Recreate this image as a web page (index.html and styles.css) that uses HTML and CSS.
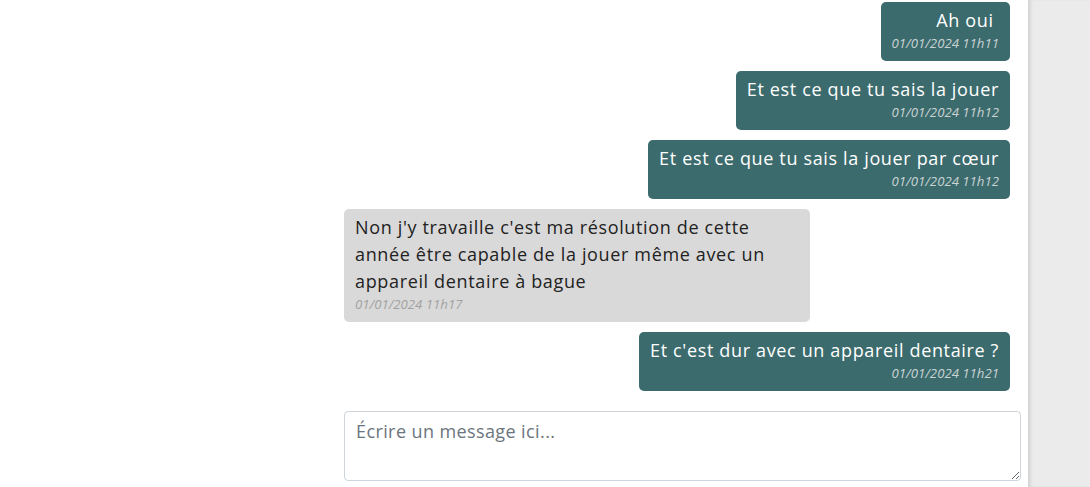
FILE: index.html
```html
<!DOCTYPE html>
<html lang="fr">
<head>
    <meta charset="UTF-8">
    <meta name="viewport" content="width=device-width, initial-scale=1.0">
    <title>Messagerie</title>
    <link rel="stylesheet" href="styles.css">
</head>
<body>
    <main class="chat">
        <div class="messages">
            <div class="msg mine">
                <div class="msg-text">Ah oui&nbsp;</div>
                <div class="msg-date">01/01/2024 11h11</div>
            </div>
            <div class="msg mine">
                <div class="msg-text">Et est ce que tu sais la jouer</div>
                <div class="msg-date">01/01/2024 11h12</div>
            </div>
            <div class="msg mine">
                <div class="msg-text">Et est ce que tu sais la jouer par cœur</div>
                <div class="msg-date">01/01/2024 11h12</div>
            </div>
            <div class="msg theirs">
                <div class="msg-text">Non j'y travaille c'est ma résolution de cette année être capable de la jouer même avec un appareil dentaire à bague</div>
                <div class="msg-date">01/01/2024 11h17</div>
            </div>
            <div class="msg mine">
                <div class="msg-text">Et c'est dur avec un appareil dentaire ?</div>
                <div class="msg-date">01/01/2024 11h21</div>
            </div>
        </div>
        <textarea class="composer" placeholder="Écrire un message ici..."></textarea>
    </main>
    <aside class="side"></aside>
</body>
</html>
```

FILE: styles.css
```css
html, body {
    height: 100%;
}
body {
    display: flex;
    margin: 0;
    font-family: "Open Sans", Arial, sans-serif;
    font-size: 18px;
    line-height: 1.5;
    color: #222;
    background: #fff;
    overflow: hidden;
}
.chat {
    flex: 1;
    display: flex;
    flex-direction: column;
    padding: 2px 7px 0 344px;
}
.messages {
    display: flex;
    flex-direction: column;
    gap: 10px;
    width: 666px;
}
.msg {
    max-width: 70%;
    padding: 5px 11px 9px;
    border-radius: 5px;
    box-sizing: border-box;
}
.msg-text {
    letter-spacing: 0.65px;
}
.msg.mine {
    align-self: flex-end;
    text-align: right;
    background: #3c6b6d;
    color: #fff;
}
.msg.theirs {
    align-self: flex-start;
    background: #d9d9d9;
    color: #222;
}
.msg-date {
    font-size: 13.2px;
    font-style: italic;
    line-height: 18px;
}
.mine .msg-date {
    color: #c9d3d3;
}
.theirs .msg-date {
    color: #a2a2a2;
}
.composer {
    margin-top: 20px;
    height: 70px;
    padding: 6px 11px;
    border: 1px solid #ced4da;
    border-radius: 4px;
    font-family: inherit;
    font-size: 18px;
    letter-spacing: 0.4px;
    line-height: 1.5;
    color: #222;
    box-sizing: border-box;
    resize: vertical;
}
.composer::placeholder {
    color: #6c757d;
}
.side {
    width: 62px;
    background: #ebebeb;
    box-shadow: inset 4px 0 4px -2px rgba(0, 0, 0, 0.12);
}
```
